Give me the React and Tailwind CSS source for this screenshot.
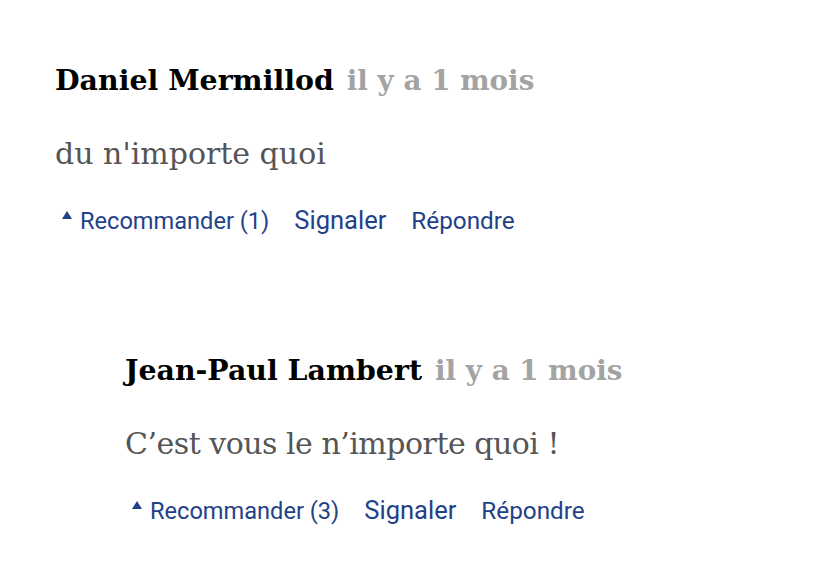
import React from "react";

function Comment({ name, body, count, indent }) {
  return (
    <div className={indent ? "pl-[125px]" : "pl-[55px]"}>
      <div className="flex items-baseline gap-[13px] font-['DejaVu_Serif',serif] leading-[40px] font-bold">
        <span className="text-black text-[28.4px]">{name}</span>
        <span className="text-[#a3a3a3] text-[27.8px]">il y a 1 mois</span>
      </div>
      <div
        className={
          "mt-[33px] font-['DejaVu_Serif',serif] text-[30px] leading-[40px] text-[#555555] " +
          (indent ? "tracking-[-0.5px]" : "")
        }
      >
        {body}
      </div>
      <div className="mt-[31px] flex items-baseline font-['Roboto',sans-serif] leading-[30px] text-[#1f4288]">
        <svg width="10" height="8" viewBox="0 0 10 8" className="self-start mt-[6px] ml-[7px] mr-[8px]">
          <path d="M5 0 L10 8 L0 8 Z" fill="#1f4288" />
        </svg>
        <span className="text-[23.6px]">Recommander ({count})</span>
        <span className="ml-[25px] text-[25.5px]">Signaler</span>
        <span className="ml-[25px] text-[24.3px]">Répondre</span>
      </div>
    </div>
  );
}

export default function App() {
  return (
    <div className="w-[839px] h-[571px] bg-white pt-[60px]">
      <Comment name="Daniel Mermillod" body="du n'importe quoi" count={1} />
      <div className="h-[114px]" />
      <Comment name="Jean-Paul Lambert" body="C’est vous le n’importe quoi !" count={3} indent />
    </div>
  );
}
